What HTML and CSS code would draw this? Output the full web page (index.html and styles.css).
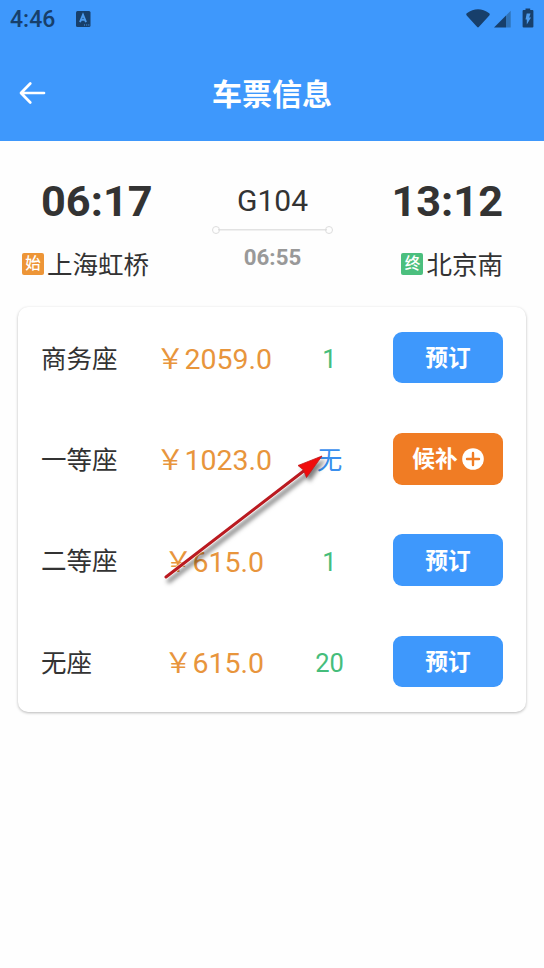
FILE: index.html
```html
<!DOCTYPE html>
<html lang="zh-CN">
<head>
<meta charset="utf-8">
<title>车票信息</title>
<link rel="stylesheet" href="styles.css">
</head>
<body>
<header class="header">
  <div class="status">
    <span class="clock">4:46</span>
    <svg class="input-icon" width="15" height="16" viewBox="0 0 15 16"><rect width="14.5" height="16" rx="1.5" fill="#173f6b"/><path d="M4 11.2 7 3.8l3 7.4M5 8.9h4" fill="none" stroke="#4c9bee" stroke-width="1.9"/><path d="M8 14h1M10.2 14h1M12.3 14h1" stroke="#4c9bee"/></svg>
    <svg class="signals" width="70" height="22" viewBox="0 0 70 22"><path d="M.8 5.300Q12 -2.700 23.2 5.300 24.3 6 23.3 7.400L12.8 19.100Q12 20 11.2 19.100L.7 7.400Q-.3 6 .8 5.300Z" fill="#173f6b"/><path d="M44.7 2.700V19.500H40V7.500Z" fill="#2f73b9"/><path d="M28 19.500 40 7.500V19.500Z" fill="#173f6b"/><path d="M59.5 1.900V.5h4.7v1.4h2.2q1 0 1 1v15.600q0 1-1 1h-8.800q-1 0-1-1V2.900q0-1 1-1h1.900Z" fill="#173f6b"/><path d="M60.700 5.500H64.500L63.200 9.500H65L60.800 16.500V11.500H59.500Z" fill="#4c9bee"/></svg>
  </div>
  <div class="navbar">
    <svg class="back" width="27" height="24" viewBox="0 0 27 24"><path d="M11.300 2.500 2 12l9.300 9.500M2.500 12H25" fill="none" stroke="#fff" stroke-width="2.700" stroke-linecap="round" stroke-linejoin="round"/></svg>
    <h1>车票信息</h1>
  </div>
</header>
<main>
  <section class="trip">
    <div class="stop start"><strong>06:17</strong><div class="station"><span class="tag">始</span><span>上海虹桥</span></div></div>
    <div class="train"><span class="number">G104</span><div class="route"></div><span class="duration">06:55</span></div>
    <div class="stop end"><strong>13:12</strong><div class="station"><span class="tag">终</span><span>北京南</span></div></div>
  </section>
  <section class="card">
    <div class="row"><span class="seat">商务座</span><span class="price">&#65509;2059.0</span><span class="left">1</span><button><span>预订</span></button></div>
    <div class="row"><span class="seat">一等座</span><span class="price">&#65509;1023.0</span><span class="left none">无</span><button class="wait"><span>候补</span><svg width="22" height="22" viewBox="0 0 22 22"><circle cx="11" cy="11" r="10.800" fill="#fff"/><path d="M11 5v12M5 11h12" stroke="#f07c24" stroke-width="2.400" stroke-linecap="round"/></svg></button></div>
    <div class="row"><span class="seat">二等座</span><span class="price">&#65509;615.0</span><span class="left">1</span><button><span>预订</span></button></div>
    <div class="row"><span class="seat">无座</span><span class="price">&#65509;615.0</span><span class="left">20</span><button><span>预订</span></button></div>
    <svg class="arrow" width="180" height="140" viewBox="0 0 180 140"><path d="M7 127 146 20" stroke="#fff" stroke-opacity=".7" stroke-width="4.500" stroke-linecap="round"/><path d="M7 127 146 20" stroke="#ba1a20" stroke-width="3" stroke-linecap="round"/><path d="M163 6 139 15.500 144.500 20 147.500 27.500Z" fill="#f00b0b" stroke="#c21a1a" stroke-width=".8"/></svg>
  </section>
</main>
</body>
</html>
```
FILE: styles.css
```css
* { box-sizing: border-box; }
body {
  margin: 0;
  min-height: 968px;
  background: #fefefe;
  color: #333;
  font-family: Roboto, "Noto Sans CJK SC", sans-serif;
}
.header { height: 140.500px; background: #3e98fc; }
.status { height: 38px; padding: 1px 10px 0; display: flex; align-items: center; color: #173f6b; }
.clock { font-size: 23px; font-weight: 500; line-height: 38px; width: 66px; }
.input-icon { margin-top: -2px; }
.signals { margin: -2px -2px 0 auto; }
.navbar { height: 102px; padding: 0 19px; display: grid; grid-template-columns: 40px 1fr 40px; align-items: center; }
.back { margin-top: 8px; }
h1 { margin: 11px 0 0; color: #fff; font-size: 30px; line-height: 40px; font-weight: 700; text-align: center; }
.trip { height: 166px; padding: 33px 41px 0; display: flex; justify-content: space-between; }
.stop { width: 140px; display: flex; flex-direction: column; }
.stop strong { font-size: 43.300px; line-height: 56px; font-weight: 700; }
.station { display: flex; align-items: center; gap: 3px; height: 35px; margin-top: 15px; font-size: 25.500px; white-space: nowrap; }
.start .station { margin-left: -19px; }
.end { align-items: flex-end; }
.tag { width: 22px; height: 22px; margin-top: 4px; border-radius: 2px; background: #ed9537; color: #fff; font-size: 15.500px; font-weight: 500; line-height: 23px; text-align: center; }
.end .tag { background: #4bbf7e; }
.train { width: 122px; display: flex; flex-direction: column; align-items: center; }
.number { font-size: 30px; line-height: 54px; padding-left: 1px; }
.route { display: flex; align-items: center; justify-content: space-between; width: 121px; height: 6px; margin: -1px 0 0; background: linear-gradient(#e2e2e2, #e2e2e2) center / 109px 1.500px no-repeat; }
.route::before, .route::after { content: ""; width: 6px; height: 6px; border: 1px solid #ddd; border-radius: 50%; }
.duration { color: #999; font-size: 22.300px; line-height: 26px; font-weight: 700; margin-top: 11px; padding-left: 1px; }
.card { position: relative; width: 508px; height: 405.500px; margin: 0 18px; padding: 0 23px; border-radius: 10px; background: #fff; box-shadow: 0 1px 3px rgba(0, 0, 0, .28); }
.row { height: 101.300px; display: grid; grid-template-columns: 110px 126px 100px 16px 110px; align-items: center; }
.seat { font-size: 25.500px; line-height: 36px; margin-top: 3px; }
.price { color: #e8953c; font-size: 28.500px; line-height: 36px; text-align: center; margin-top: 6px; white-space: nowrap; }
.left { color: #45bd7b; font-size: 25.500px; line-height: 36px; text-align: center; margin: 4px 0 0 5px; }
.left.none { color: #3a8fee; }
button { grid-column: 5; width: 110px; height: 51.500px; margin-top: 1px; padding: 0; border: 0; border-radius: 9px; background: #3e98fc; color: #fff; font: 700 22.700px/34px Roboto, "Noto Sans CJK SC", sans-serif; display: flex; align-items: center; justify-content: center; gap: 4px; }
button span { padding-top: 3px; }
.wait { background: #f07c24; }
.arrow { position: absolute; left: 141px; top: 143px; filter: drop-shadow(3px 4px 2px rgba(0, 0, 0, .5)); }
```
